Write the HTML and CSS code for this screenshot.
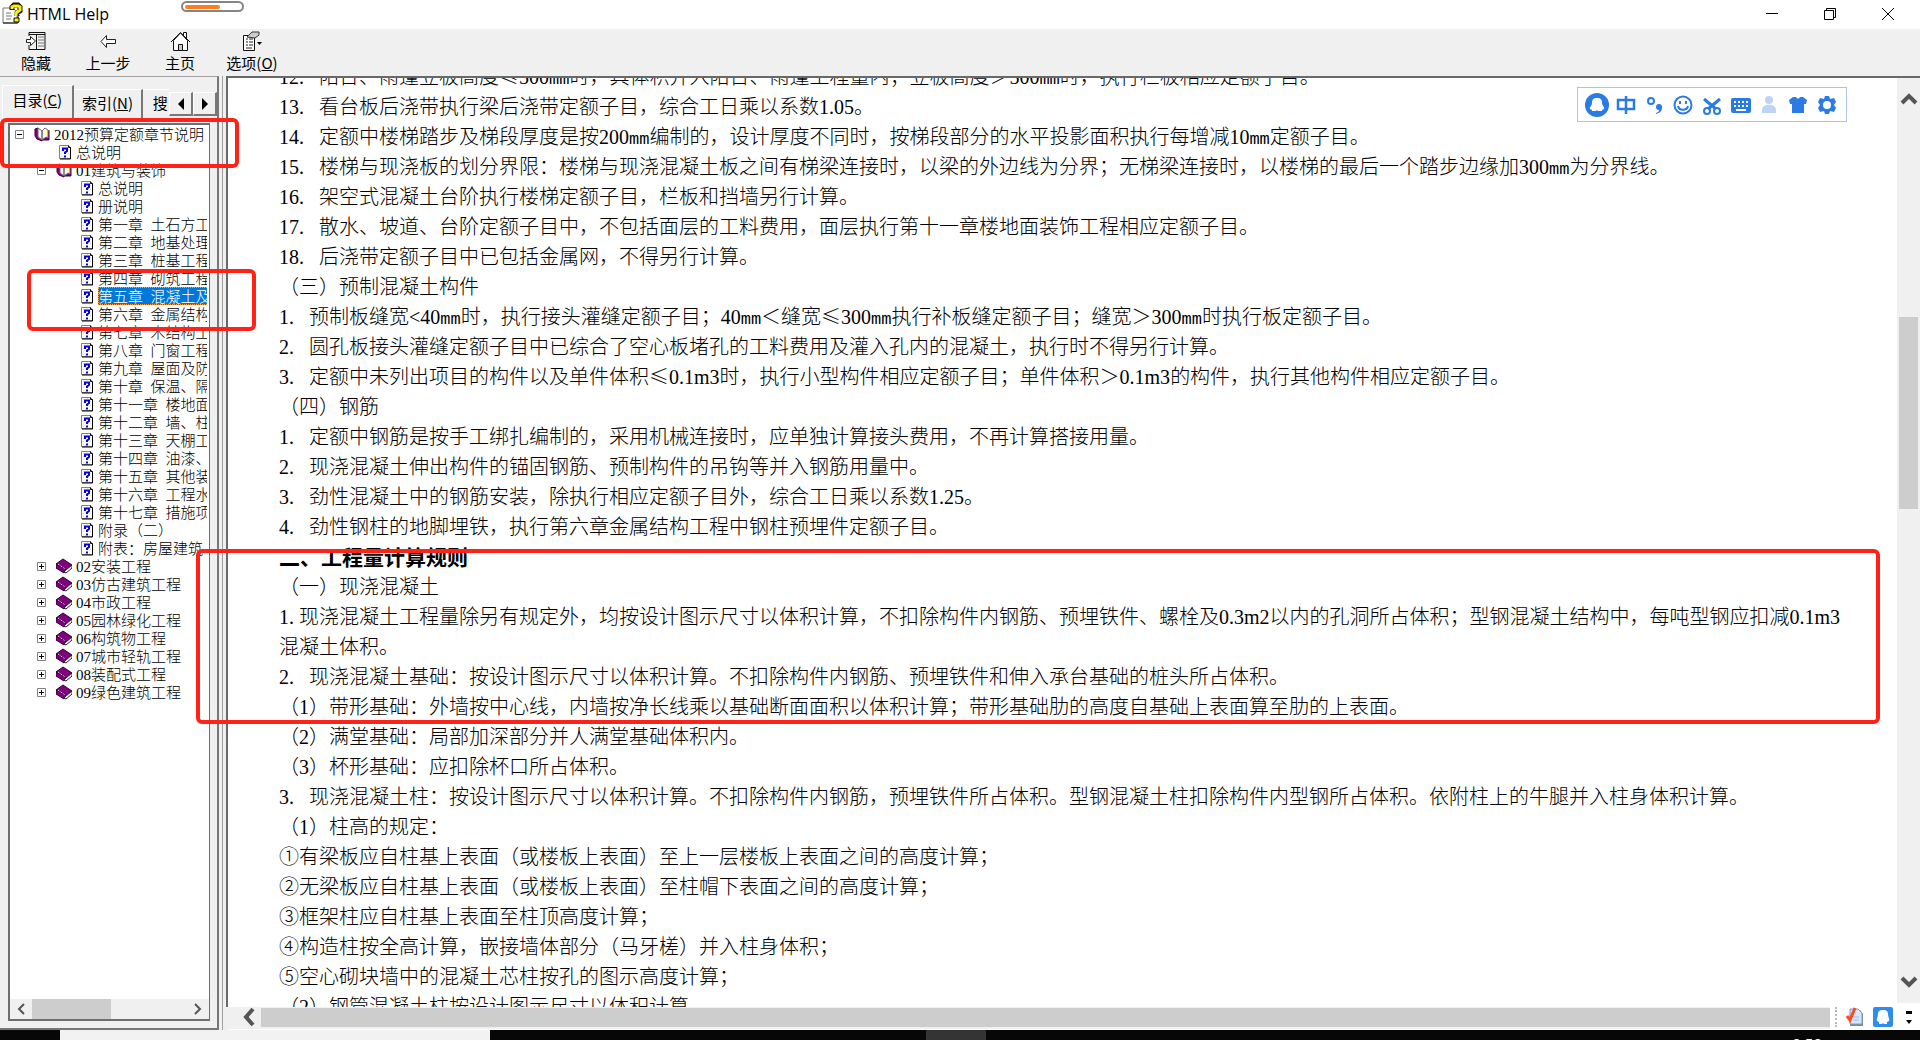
FILE: index.html
```html
<!DOCTYPE html>
<html lang="zh-CN">
<head>
  <meta charset="UTF-8" />
  <meta name="viewport" content="width=device-width, initial-scale=1.0"/>
  <title>HTML Help</title>
  <link rel="stylesheet" href="styles.css">
</head>
<body>

  <!-- Shared icons -->
  <svg class="defs" width="0" height="0">
    <symbol id="page" viewBox="0 0 16 16">
      <path d="M3.500 1.500h9l2 2v11h-11z" fill="#fff" stroke="#808080"/>
      <path d="M5 3h1v1H5zM5 6h1v1H5zM5 9h1v1H5zM5 12h1v1H5zM7 13h1v1H7zM12 5h1v1h-1zM12 9h1v1h-1zM11 13h1v1h-1zM9 2h1v1H9z" fill="#ff0"/>
      <path d="M12.500 1.500v2h2v11.500H4" fill="none" stroke="#000"/>
      <path d="M7 7V4.500h4V7L9 8.500V10M9 11.500v2" fill="none" stroke="#0000e0" stroke-width="2"/>
    </symbol>
    <symbol id="book" viewBox="0 0 16 16">
      <path d="M0 6L7 1l9 6-6 5z" fill="#800080" stroke="#300030"/>
      <path d="M0 6v4l8 5 2-3z" fill="#800080" stroke="#300030"/>
      <path d="M10 12l6-5v3l-6 5-2-1z" fill="#fff" stroke="#222"/>
      <path d="M2 6l7 5" stroke="#fff" stroke-dasharray="1 1"/>
    </symbol>
    <symbol id="open" viewBox="0 0 16 16">
      <path d="M1 3l3-1 4 4v9l-5-2-2-3zM15 4v10H8" fill="#800080" stroke="#400040"/>
      <path d="M4 2l4 3v9l-4-3zM8 5l3-3 3 2v8l-2-1-4 3z" fill="#fff" stroke="#666"/>
      <path d="M10 5v7M12 4v6" stroke="#ff0" stroke-dasharray="1 1"/>
    </symbol>
    <symbol id="minus" viewBox="0 0 9 9"><path d="M.5.5h8v8h-8z" fill="#fff" stroke="#808080"/><path d="M2 4.500h5" stroke="#000"/></symbol>
    <symbol id="plus" viewBox="0 0 9 9"><path d="M.5.5h8v8h-8z" fill="#fff" stroke="#808080"/><path d="M2 4.500h5M4.500 2v5" stroke="#000"/></symbol>
  </svg>

  <!-- Title bar -->
  <header class="titlebar">
    <svg class="app-icon" viewBox="0 0 20 20">
      <path d="M1 4h10l4 4v11H1z" fill="#fff" stroke="#777"/><path d="M1 19h15V8" fill="none" stroke="#111"/>
      <path d="M4 9h5M4 12h6M4 15h5" stroke="#777"/>
      <path d="M10 6V3l2-2h4l2 2v4l-3 2v3" fill="none" stroke="#111" stroke-width="5"/>
      <path d="M10 5V3l2-1h4l2 1v3l-4 3v3" fill="none" stroke="#ffef00" stroke-width="3"/>
      <path d="M12 14h5v4h-5z" fill="#ffef00" stroke="#111"/>
    </svg>
    <h1>HTML Help</h1>
    <div class="pill"><span></span></div>
    <div class="win-buttons">
      <button aria-label="最小化"><svg viewBox="0 0 12 12"><path d="M0 5.500h12" stroke="#000"/></svg></button>
      <button aria-label="还原"><svg viewBox="0 0 12 12"><path d="M.5 2.500h9v9h-9zM2.500 2.500v-2h9v9h-2" fill="none" stroke="#000"/></svg></button>
      <button aria-label="关闭"><svg viewBox="0 0 12 12"><path d="M0 0l12 12M12 0L0 12" stroke="#000"/></svg></button>
    </div>
  </header>

  <!-- Toolbar -->
  <nav class="toolbar">
    <button>
      <svg viewBox="0 0 20 20"><path d="M3 5V1.500h16v17H3V14M3 3.500h16M10.500 4v14" fill="none" stroke="#111"/><path d="M12 6h6M12 9h6M12 12h6M12 15h6" stroke="#777"/><path d="M.5 8.500h4v-3l5 4.500-5 4.500v-3h-4z" fill="#fff" stroke="#222"/></svg>
      隐藏
    </button>
    <button>
      <svg viewBox="0 0 20 20"><path d="M3 10.500l5.500-6v4h9v4h-9v4z" fill="#fff" stroke="#222"/></svg>
      上一步
    </button>
    <button>
      <svg viewBox="0 0 20 20"><path d="M13.500 6V1.500h3V9" fill="#fff" stroke="#111"/><path d="M3.500 9.500v10h14v-10L10.500 2z" fill="#fff" stroke="#111"/><path d="M1 11L10.500 1.500 20 11" fill="none" stroke="#111"/><path d="M8.500 19.500v-6h4v6z" fill="#ccc" stroke="#111"/></svg>
      主页
    </button>
    <button>
      <svg viewBox="0 0 20 20"><path d="M1.500 4.500h11v15h-11z" fill="#fff" stroke="#111"/><path d="M4 8h2M7 8h4M4 11h2M7 11h4M4 14h2M7 14h4M4 17h6" stroke="#222"/><path d="M5 6l5-5h7v3l-4 3z" fill="#ccc" stroke="#333"/><path d="M15 11h5l-2.500 3z"/></svg>
      <span>选项(<u>O</u>)</span>
    </button>
  </nav>

  <main>
    <!-- Contents pane -->
    <aside class="sidebar">
      <div class="tabs">
        <button class="tab active">目录(<u>C</u>)</button>
        <button class="tab">索引(<u>N</u>)</button>
        <button class="tab cut">搜</button>
        <button class="spin" aria-label="向左"><svg viewBox="0 0 8 12"><path d="M7 0v12L1 6z"/></svg></button>
        <button class="spin" aria-label="向右"><svg viewBox="0 0 8 12"><path d="M1 0v12l6-6z"/></svg></button>
      </div>
      <div class="tree-frame">
        <ul class="tree">
          <li class="root"><svg class="box"><use href="#minus"/></svg><svg><use href="#open"/></svg><a href="#"><span class="n">2012</span>预算定额章节说明</a></li>
          <li class="leaf"><svg><use href="#page"/></svg><a href="#">总说明</a></li>
          <li class="node"><svg class="box"><use href="#minus"/></svg><svg><use href="#open"/></svg><a href="#"><span class="n">01</span>建筑与装饰</a></li>
          <li class="sub"><svg><use href="#page"/></svg><a href="#">总说明</a></li>
          <li class="sub"><svg><use href="#page"/></svg><a href="#">册说明</a></li>
          <li class="sub"><svg><use href="#page"/></svg><a href="#">第一章&ensp;土石方工</a></li>
          <li class="sub"><svg><use href="#page"/></svg><a href="#">第二章&ensp;地基处理</a></li>
          <li class="sub"><svg><use href="#page"/></svg><a href="#">第三章&ensp;桩基工程</a></li>
          <li class="sub"><svg><use href="#page"/></svg><a href="#">第四章&ensp;砌筑工程</a></li>
          <li class="sub selected"><svg><use href="#page"/></svg><a href="#">第五章&ensp;混凝土及</a></li>
          <li class="sub"><svg><use href="#page"/></svg><a href="#">第六章&ensp;金属结构</a></li>
          <li class="sub"><svg><use href="#page"/></svg><a href="#">第七章&ensp;木结构工</a></li>
          <li class="sub"><svg><use href="#page"/></svg><a href="#">第八章&ensp;门窗工程</a></li>
          <li class="sub"><svg><use href="#page"/></svg><a href="#">第九章&ensp;屋面及防</a></li>
          <li class="sub"><svg><use href="#page"/></svg><a href="#">第十章&ensp;保温、隔</a></li>
          <li class="sub"><svg><use href="#page"/></svg><a href="#">第十一章&ensp;楼地面</a></li>
          <li class="sub"><svg><use href="#page"/></svg><a href="#">第十二章&ensp;墙、柱</a></li>
          <li class="sub"><svg><use href="#page"/></svg><a href="#">第十三章&ensp;天棚工</a></li>
          <li class="sub"><svg><use href="#page"/></svg><a href="#">第十四章&ensp;油漆、</a></li>
          <li class="sub"><svg><use href="#page"/></svg><a href="#">第十五章&ensp;其他装</a></li>
          <li class="sub"><svg><use href="#page"/></svg><a href="#">第十六章&ensp;工程水</a></li>
          <li class="sub"><svg><use href="#page"/></svg><a href="#">第十七章&ensp;措施项</a></li>
          <li class="sub"><svg><use href="#page"/></svg><a href="#">附录（二）</a></li>
          <li class="sub"><svg><use href="#page"/></svg><a href="#">附表：房屋建筑·</a></li>
          <li class="node"><svg class="box"><use href="#plus"/></svg><svg><use href="#book"/></svg><a href="#"><span class="n">02</span>安装工程</a></li>
          <li class="node"><svg class="box"><use href="#plus"/></svg><svg><use href="#book"/></svg><a href="#"><span class="n">03</span>仿古建筑工程</a></li>
          <li class="node"><svg class="box"><use href="#plus"/></svg><svg><use href="#book"/></svg><a href="#"><span class="n">04</span>市政工程</a></li>
          <li class="node"><svg class="box"><use href="#plus"/></svg><svg><use href="#book"/></svg><a href="#"><span class="n">05</span>园林绿化工程</a></li>
          <li class="node"><svg class="box"><use href="#plus"/></svg><svg><use href="#book"/></svg><a href="#"><span class="n">06</span>构筑物工程</a></li>
          <li class="node"><svg class="box"><use href="#plus"/></svg><svg><use href="#book"/></svg><a href="#"><span class="n">07</span>城市轻轨工程</a></li>
          <li class="node"><svg class="box"><use href="#plus"/></svg><svg><use href="#book"/></svg><a href="#"><span class="n">08</span>装配式工程</a></li>
          <li class="node"><svg class="box"><use href="#plus"/></svg><svg><use href="#book"/></svg><a href="#"><span class="n">09</span>绿色建筑工程</a></li>
        </ul>
        <div class="tree-scroll">
          <svg viewBox="0 0 8 12"><path d="M7 1L2 6l5 5" fill="none" stroke="#555" stroke-width="2"/></svg>
          <div class="track"><div class="thumb"></div></div>
          <svg viewBox="0 0 8 12"><path d="M1 1l5 5-5 5" fill="none" stroke="#555" stroke-width="2"/></svg>
        </div>
      </div>
    </aside>

    <!-- Topic pane -->
    <section class="viewer">
      <div class="page-row">
        <article>
          <p><span class="no wide">12.</span>阳台、雨篷立板高度≤<span class="n">500<i>mm</i></span>时，具体积并入阳台、雨篷工程量内；立板高度＞<span class="n">500<i>mm</i></span>时，执行栏板相应定额子目。</p>
          <p><span class="no wide">13.</span>看台板后浇带执行梁后浇带定额子目，综合工日乘以系数<span class="n">1.05</span>。</p>
          <p><span class="no wide">14.</span>定额中楼梯踏步及梯段厚度是按<span class="n">200<i>mm</i></span>编制的，设计厚度不同时，按梯段部分的水平投影面积执行每增减<span class="n">10<i>mm</i></span>定额子目。</p>
          <p><span class="no wide">15.</span>楼梯与现浇板的划分界限：楼梯与现浇混凝土板之间有梯梁连接时，以梁的外边线为分界；无梯梁连接时，以楼梯的最后一个踏步边缘加<span class="n">300<i>mm</i></span>为分界线。</p>
          <p><span class="no wide">16.</span>架空式混凝土台阶执行楼梯定额子目，栏板和挡墙另行计算。</p>
          <p><span class="no wide">17.</span>散水、坡道、台阶定额子目中，不包括面层的工料费用，面层执行第十一章楼地面装饰工程相应定额子目。</p>
          <p><span class="no wide">18.</span>后浇带定额子目中已包括金属网，不得另行计算。</p>
          <p>（三）预制混凝土构件</p>
          <p><span class="no">1.</span>预制板缝宽<span class="n">&lt;40<i>mm</i></span>时，执行接头灌缝定额子目；<span class="n">40<i>mm</i></span>＜缝宽≤<span class="n">300<i>mm</i></span>执行补板缝定额子目；缝宽＞<span class="n">300<i>mm</i></span>时执行板定额子目。</p>
          <p><span class="no">2.</span>圆孔板接头灌缝定额子目中已综合了空心板堵孔的工料费用及灌入孔内的混凝土，执行时不得另行计算。</p>
          <p><span class="no">3.</span>定额中未列出项目的构件以及单件体积≤<span class="n">0.1m3</span>时，执行小型构件相应定额子目；单件体积＞<span class="n">0.1m3</span>的构件，执行其他构件相应定额子目。</p>
          <p>（四）钢筋</p>
          <p><span class="no">1.</span>定额中钢筋是按手工绑扎编制的，采用机械连接时，应单独计算接头费用，不再计算搭接用量。</p>
          <p><span class="no">2.</span>现浇混凝土伸出构件的锚固钢筋、预制构件的吊钩等并入钢筋用量中。</p>
          <p><span class="no">3.</span>劲性混凝土中的钢筋安装，除执行相应定额子目外，综合工日乘以系数<span class="n">1.25</span>。</p>
          <p><span class="no">4.</span>劲性钢柱的地脚埋铁，执行第六章金属结构工程中钢柱预埋件定额子目。</p>
          <h2>二、工程量计算规则</h2>
          <p>（一）现浇混凝土</p>
          <p><span class="no tight">1.</span>现浇混凝土工程量除另有规定外，均按设计图示尺寸以体积计算，不扣除构件内钢筋、预埋铁件、螺栓及<span class="n">0.3m2</span>以内的孔洞所占体积；型钢混凝土结构中，每吨型钢应扣减<span class="n">0.1m3</span>混凝土体积。</p>
          <p><span class="no">2.</span>现浇混凝土基础：按设计图示尺寸以体积计算。不扣除构件内钢筋、预埋铁件和伸入承台基础的桩头所占体积。</p>
          <p>（<span class="n">1</span>）带形基础：外墙按中心线，内墙按净长线乘以基础断面面积以体积计算；带形基础肋的高度自基础上表面算至肋的上表面。</p>
          <p>（<span class="n">2</span>）满堂基础：局部加深部分并人满堂基础体积内。</p>
          <p>（<span class="n">3</span>）杯形基础：应扣除杯口所占体积。</p>
          <p><span class="no">3.</span>现浇混凝土柱：按设计图示尺寸以体积计算。不扣除构件内钢筋，预埋铁件所占体积。型钢混凝土柱扣除构件内型钢所占体积。依附柱上的牛腿并入柱身体积计算。</p>
          <p>（<span class="n">1</span>）柱高的规定：</p>
          <p>①有梁板应自柱基上表面（或楼板上表面）至上一层楼板上表面之间的高度计算；</p>
          <p>②无梁板应自柱基上表面（或楼板上表面）至柱帽下表面之间的高度计算；</p>
          <p>③框架柱应自柱基上表面至柱顶高度计算；</p>
          <p>④构造柱按全高计算，嵌接墙体部分（马牙槎）并入柱身体积；</p>
          <p>⑤空心砌块墙中的混凝土芯柱按孔的图示高度计算；</p>
          <p>（<span class="n">2</span>）钢管混凝土柱按设计图示尺寸以体积计算</p>
        </article>
        <div class="vscroll">
          <svg viewBox="0 0 18 14"><path d="M2 12l7-7 7 7" fill="none" stroke="#555" stroke-width="4"/></svg>
          <div class="thumb"></div>
          <svg viewBox="0 0 18 14"><path d="M2 2l7 7 7-7" fill="none" stroke="#555" stroke-width="4"/></svg>
        </div>
      </div>
      <div class="bottom-row">
        <div class="hscroll">
          <svg viewBox="0 0 14 18"><path d="M11 1L4 9l7 8" fill="none" stroke="#555" stroke-width="4"/></svg>
          <div class="thumb"></div>
        </div>
        <div class="tray">
          <span class="grip"></span>
          <svg viewBox="0 0 20 20"><path d="M6 3h9l3 4v12H5z" fill="#888"/><path d="M5 2h8l4 4v11H5z" fill="#d7e7ff" stroke="#7896d0"/><path d="M8 10h6M8 13h6" stroke="#9bbcf4"/><path d="M2 9l3 4L10 1" fill="none" stroke="#ff4a1c" stroke-width="3"/></svg>
          <svg viewBox="0 0 20 20"><rect width="20" height="20" rx="2" fill="#2d8cf0"/><path d="M10 3c4 0 5 2 5 4 0 3 2 5 1 7l-2 1v2h-3l-1-1-1 1H6v-2l-2-1c-1-2 1-4 1-7 0-2 1-4 5-4z" fill="#fff"/></svg>
          <svg class="more" viewBox="0 0 8 16"><path d="M1 2h6v3H1zM1 11h6l-3 4z"/></svg>
        </div>
      </div>
    </section>
  </main>

  <!-- Taskbar -->
  <footer class="taskbar">
    <div class="search"></div>
    <div class="task"></div>
    <time>9:50</time>
  </footer>

  <!-- Input method bar -->
  <div class="ime">
    <button aria-label="输入法"><svg class="big" viewBox="0 0 24 24"><circle cx="12" cy="12" r="12" fill="#2b7be4"/><path d="M12 5c4 0 5 2 5 5s3 4 2 6l-2 1v1h-4l-1-1-1 1H7v-1l-2-1c-1-2 2-3 2-6s1-5 5-5z" fill="#fff"/></svg></button>
    <button aria-label="中文"><svg viewBox="0 0 20 20"><path d="M2 5h16v9H2zM10 1v18" fill="none" stroke="#2b7be4" stroke-width="2.500"/></svg></button>
    <button aria-label="标点"><svg viewBox="0 0 20 20"><circle cx="6" cy="6" r="3" fill="none" stroke="#2b7be4" stroke-width="2"/><path d="M11 18c3-1 3-2 3-3a3 3 0 1 1 3-3c0 4-2 6-6 7z" fill="#2b7be4"/></svg></button>
    <button aria-label="表情"><svg viewBox="0 0 20 20"><circle cx="10" cy="10" r="8.500" fill="none" stroke="#2b7be4" stroke-width="2"/><path d="M7 6v3M13 6v3M5 11c1 5 9 5 10 0" fill="none" stroke="#2b7be4" stroke-width="2"/></svg></button>
    <button aria-label="截图"><svg viewBox="0 0 20 20"><path d="M2 4l12 10M18 4L6 14" stroke="#2b7be4" stroke-width="3"/><g fill="none" stroke="#2b7be4" stroke-width="2"><circle cx="5" cy="16" r="3"/><circle cx="15" cy="16" r="3"/></g></svg></button>
    <button aria-label="键盘"><svg viewBox="0 0 20 20"><rect y="3" width="20" height="15" rx="2" fill="#2b7be4"/><path d="M3 7h14M3 11h14" stroke="#fff" stroke-width="2" stroke-dasharray="2 2"/><path d="M5 15h10" stroke="#fff" stroke-width="2"/></svg></button>
    <button aria-label="用户"><svg viewBox="0 0 20 20"><circle cx="10" cy="5" r="4" fill="#bed4f7"/><path d="M3 18v-3c0-7 14-7 14 0v3z" fill="#bed4f7"/></svg></button>
    <button aria-label="皮肤"><svg viewBox="0 0 20 20"><path d="M5 2h3c1 2 3 2 4 0h3l4 3-1 4h-2v9H4V9H2L1 5z" fill="#2b7be4"/></svg></button>
    <button aria-label="设置"><svg viewBox="0 0 20 20"><path d="M8 1h4l1 3 4-1 2 4-2 3 2 3-2 4-4-1-1 3H8l-1-3-4 1-2-4 2-3-2-3 2-4 4 1z" fill="#2b7be4"/><circle cx="10" cy="10" r="4" fill="#fff"/></svg></button>
  </div>

  <!-- Red marks -->
  <div class="mark mark-root"></div>
  <div class="mark mark-chapter"></div>
  <div class="mark mark-rules"></div>

</body>
</html>
```
FILE: styles.css
```css
* { box-sizing: border-box; }
body { margin: 0; height: 100vh; display: flex; flex-direction: column; overflow: hidden; position: relative; background: #f0f0f0; color: #000; font-family: "Noto Sans CJK SC", sans-serif; font-size: 15px; font-weight: 300; text-spacing-trim: space-all; text-autospace: no-autospace; }
button { background: none; border: none; padding: 0; font: inherit; color: inherit; }
a { color: inherit; text-decoration: none; }
svg { display: block; flex: none; overflow: visible; }
.defs { position: absolute; }

.titlebar { height: 29px; flex: none; display: flex; align-items: center; background: #fff; padding: 0 3px 2px 2px; }
.titlebar h1 { margin: 0 0 0 5px; font: 400 16px "Open Sans", sans-serif; }
.app-icon { width: 20px; height: 20px; }
.pill { position: absolute; left: 181px; top: 1px; width: 63px; height: 11px; border: 2px solid #858585; border-radius: 6px; background: #fff; padding: 2px; }
.pill span { display: block; width: 35px; height: 4px; border-radius: 2px; background: #ff7f1e; }
.win-buttons { margin-left: auto; display: flex; }
.win-buttons button { width: 58px; height: 27px; display: flex; align-items: center; justify-content: center; }
.win-buttons svg { width: 12px; height: 12px; }

.toolbar { height: 47px; flex: none; display: flex; padding-bottom: 2px; }
.toolbar button { width: 72px; display: flex; flex-direction: column; align-items: center; justify-content: center; gap: 2px; line-height: 20px; font-weight: 400; }
.toolbar svg { width: 20px; height: 20px; }

main { flex: 1; min-height: 0; display: flex; }
.sidebar { width: 219px; flex: none; display: flex; flex-direction: column; border-top: 1px solid #a0a0a0; border-right: 2px solid #777; border-bottom: 2px solid #777; }
.tabs { height: 41px; flex: none; display: flex; align-items: flex-end; padding-left: 2px; font-weight: 400; line-height: 20px; overflow: hidden; }
.tab { width: 70px; height: 29px; padding-bottom: 2px; border-top: 1px solid #fff; border-right: 2px solid #777; white-space: nowrap; }
.tab.active { width: 72px; height: 33px; padding-bottom: 4px; border-left: 1px solid #fff; }
.tab.cut { width: 26px; border-right: none; padding-left: 8px; }
.spin { width: 24px; height: 24px; margin-bottom: 2px; display: flex; align-items: center; justify-content: center; border: 1px solid #fff; border-right: 2px solid #777; border-bottom: 2px solid #777; }
.spin svg { width: 8px; height: 12px; }

.tree-frame { flex: 1; min-height: 0; margin: 5px 7px 7px 8px; display: flex; flex-direction: column; background: #fff; border: 2px solid #6e6e6e; border-right: 1px solid #6e6e6e; }
.tree { flex: 1; min-height: 0; margin: 0 2px 0 1px; padding: 0; list-style: none; overflow: hidden; }
.tree li { height: 18px; display: flex; align-items: center; gap: 4px; line-height: 18px; white-space: nowrap; }
.tree svg { width: 16px; height: 16px; }
.tree svg.box { width: 9px; height: 9px; margin-right: 6px; }
.tree a { flex: 1; }
.root { padding-left: 4px; }
.node { padding-left: 26px; }
.leaf { padding-left: 45px; }
.sub { padding-left: 67px; }
.selected a { background: #0078d7; color: #fff; outline: 1px dotted #ff9d3c; outline-offset: -1px; }

/* half-width runs: numbers in serif, units in mono */
.n, .no { font-family: "Liberation Serif", serif; font-weight: 400; line-height: 1; }
.n i { font: 17px/1 "Liberation Mono", monospace; }
.no { display: inline-block; width: 30px; }
.no.wide { width: 40px; }
.no.tight { width: 20px; }

.tree-scroll { height: 20px; display: flex; align-items: center; gap: 7px; padding: 0 7px; background: #f0f0f0; }
.tree-scroll svg { width: 8px; height: 12px; }
.track { flex: 1; height: 100%; }
.track .thumb { width: 51%; height: 100%; }
.thumb { background: #cdcdcd; }

.viewer { flex: 1; min-width: 0; display: flex; flex-direction: column; margin-left: 3px; border-left: 1px solid #a0a0a0; }
.page-row { flex: 1; min-height: 0; display: flex; margin-left: 3px; border-left: 2px solid #696969; border-top: 2px solid #696969; background: #fff; }
article { flex: 1; min-width: 0; height: 100%; overflow: hidden; padding: 0 50px 0 51px; font-size: 20px; line-height: 30px; }
article p, article h2 { margin: 0; }
article p:first-child { margin-top: -17px; }
article h2 { font-size: 21px; font-weight: 700; }
.vscroll { width: 23px; flex: none; display: flex; flex-direction: column; align-items: center; justify-content: space-between; background: #f0f0f0; padding: 13px 2px; margin-bottom: 4px; }
.vscroll svg { width: 18px; height: 14px; }
.vscroll .thumb { width: 19px; height: 192px; margin-bottom: 256px; }
.bottom-row { height: 23px; flex: none; display: flex; margin-left: 5px; border-bottom: 1px solid #fff; }
.hscroll { flex: 1; display: flex; align-items: center; gap: 5px; padding: 0 0 2px 14px; background: #f0f0f0; }
.hscroll svg { width: 14px; height: 18px; }
.hscroll .thumb { flex: 1; height: 19px; }
.tray { width: 90px; display: flex; align-items: center; gap: 8px; padding: 0 0 2px 5px; background: #fff; }
.tray svg { width: 20px; height: 20px; }
.tray .more { width: 8px; height: 16px; margin-left: 4px; }
.grip { height: 20px; border-left: 2px dotted #bbb; }

.taskbar { height: 10px; flex: none; display: flex; background: #070707; overflow: hidden; }
.search { width: 430px; margin-left: 60px; background: #f2f2f2; }
.task { width: 60px; margin-left: 436px; background: #343434; }
.taskbar time { margin: 3px 98px 0 auto; color: #fff; font: 15px "Open Sans", sans-serif; }

.ime { position: absolute; top: 87px; right: 73px; width: 270px; height: 35px; padding: 0 5px; display: flex; align-items: center; border: 1px solid #a9c5ef; background: #fff; }
.ime button { flex: 1; display: flex; justify-content: center; }
.ime svg { width: 20px; height: 20px; }
.ime svg.big { width: 24px; height: 24px; }

.mark { position: absolute; border: 4px solid #ff2216; border-radius: 6px; pointer-events: none; }
.mark-root { left: 0; top: 118px; width: 239px; height: 50px; }
.mark-chapter { left: 27px; top: 269px; width: 229px; height: 62px; }
.mark-rules { left: 196px; right: 40px; top: 549px; height: 175px; }
```
